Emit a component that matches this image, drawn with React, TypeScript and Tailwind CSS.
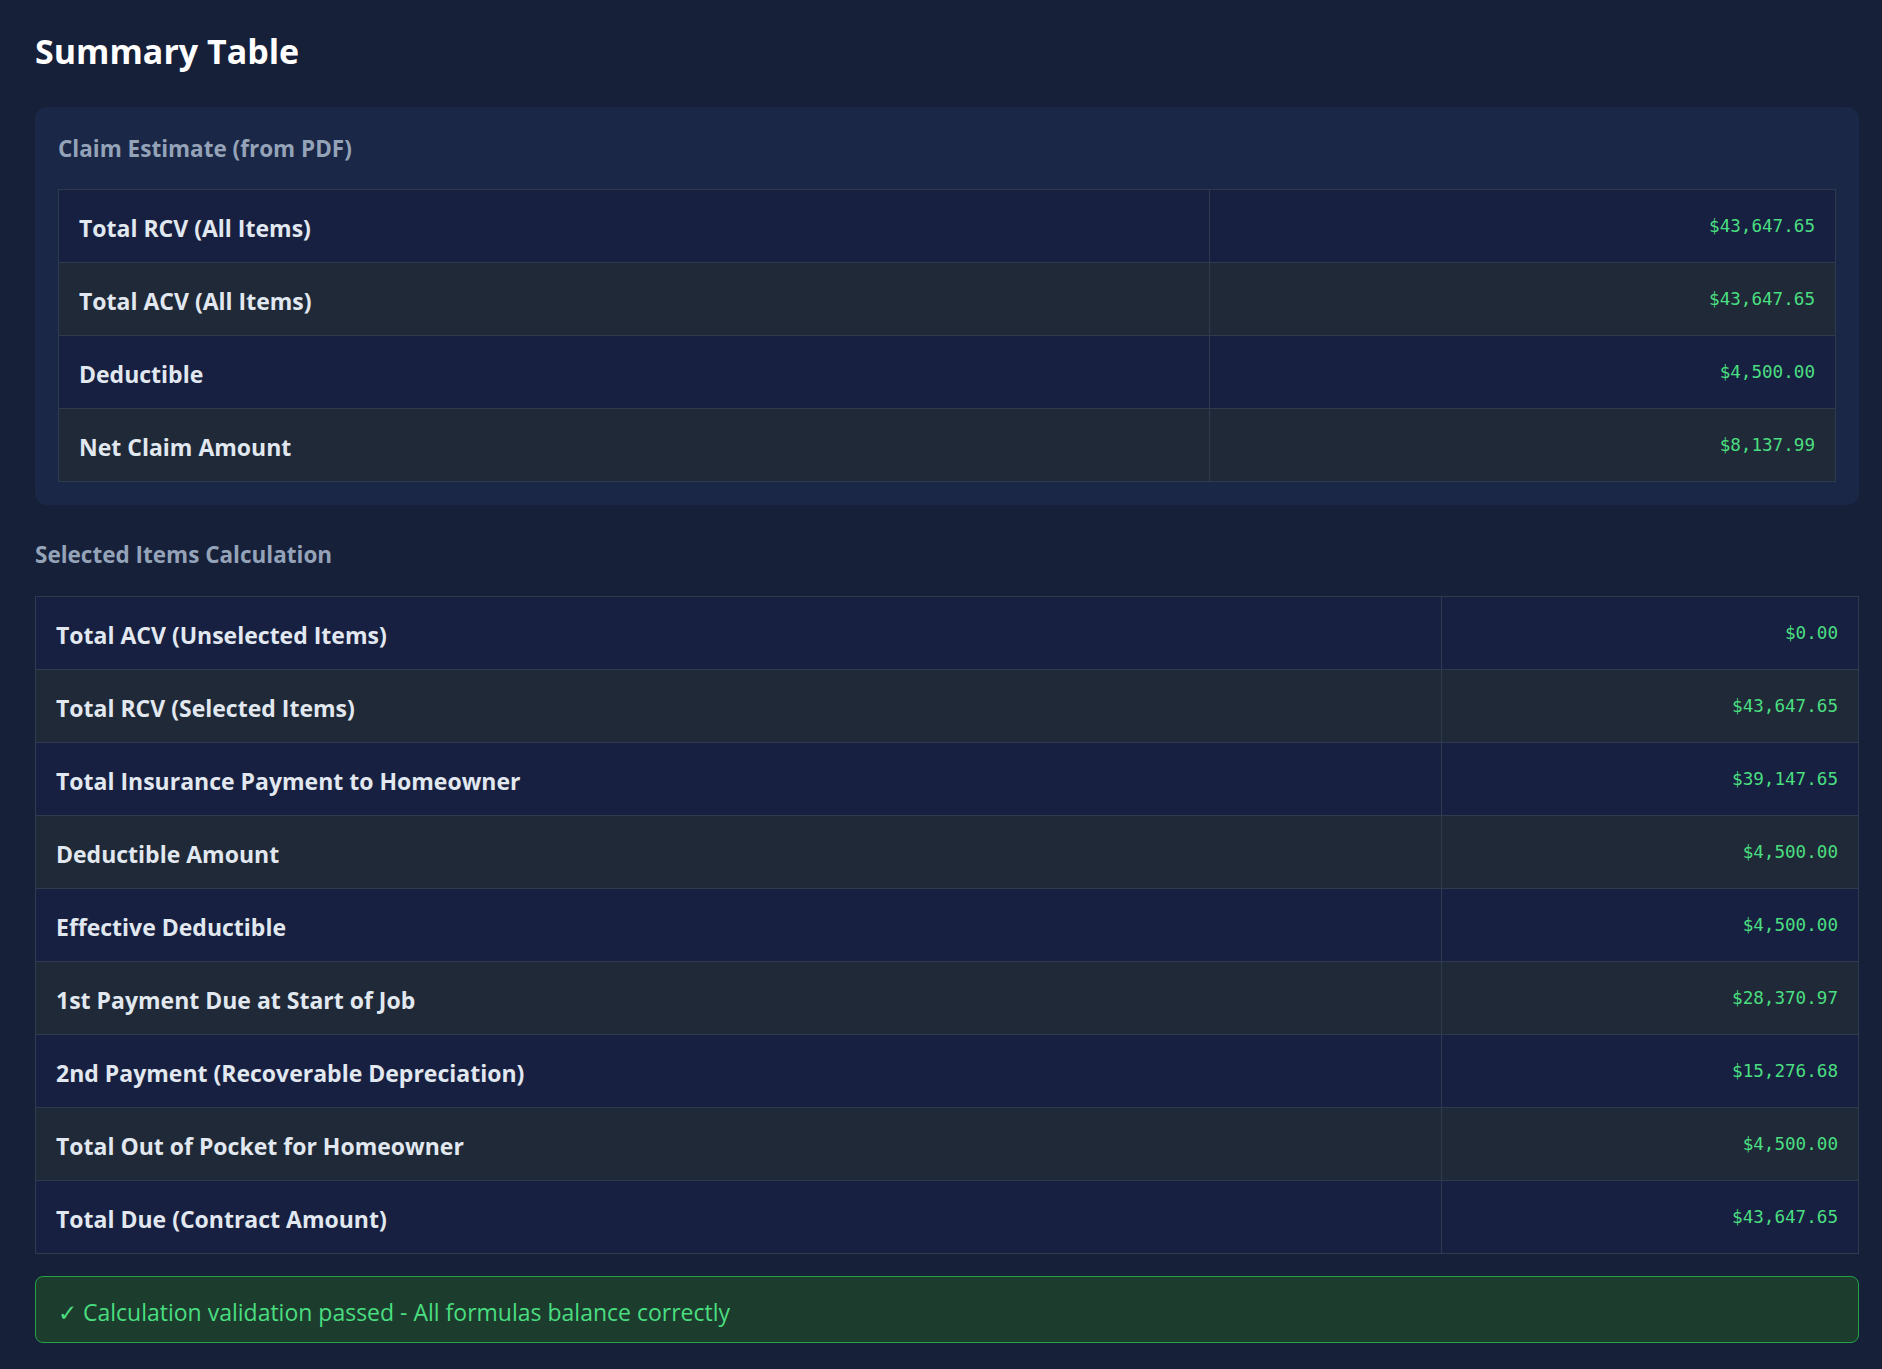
import React from 'react';

type Row = { label: string; value: string };

const claimRows: Row[] = [
  { label: 'Total RCV (All Items)', value: '$43,647.65' },
  { label: 'Total ACV (All Items)', value: '$43,647.65' },
  { label: 'Deductible', value: '$4,500.00' },
  { label: 'Net Claim Amount', value: '$8,137.99' },
];

const selectedRows: Row[] = [
  { label: 'Total ACV (Unselected Items)', value: '$0.00' },
  { label: 'Total RCV (Selected Items)', value: '$43,647.65' },
  { label: 'Total Insurance Payment to Homeowner', value: '$39,147.65' },
  { label: 'Deductible Amount', value: '$4,500.00' },
  { label: 'Effective Deductible', value: '$4,500.00' },
  { label: '1st Payment Due at Start of Job', value: '$28,370.97' },
  { label: '2nd Payment (Recoverable Depreciation)', value: '$15,276.68' },
  { label: 'Total Out of Pocket for Homeowner', value: '$4,500.00' },
  { label: 'Total Due (Contract Amount)', value: '$43,647.65' },
];

function SummaryRows({ rows, wide }: { rows: Row[]; wide: boolean }) {
  return (
    <div className="border border-[#2e3a4e]">
      {rows.map((row, i) => (
        <div
          key={row.label}
          className={`grid ${wide ? 'grid-cols-[1fr_626px]' : 'grid-cols-[1fr_417px]'} ${
            i > 0 ? 'h-[73px] border-t border-[#2e3a4e]' : 'h-[72px]'
          } ${i % 2 === 1 ? 'bg-[#1f2937]' : 'bg-[#172040]'}`}
        >
          <div className="flex items-center pl-5 pt-[5px] text-[23px] font-bold text-[#e2e8f0]">
            {row.label}
          </div>
          <div className="flex items-center justify-end border-l border-[#2e3a4e] pr-5 font-['DejaVu_Sans_Mono',monospace] text-[17.6px] text-[#4ade80]">
            {row.value}
          </div>
        </div>
      ))}
    </div>
  );
}

export default function App() {
  return (
    <div className="min-h-screen bg-[#172039] pl-[35px] pr-[23px] pt-[31px] pb-[27px] font-['Open_Sans',sans-serif]">
      {/* header */}
      <h1 className="text-[34px] font-bold leading-[41px] text-white">Summary Table</h1>

      {/* claim estimate card */}
      <div className="mt-[35px] rounded-xl bg-[#1b2746] px-[23px] pt-[26px] pb-[23px]">
        <h2 className="mb-[24px] text-[22.5px] font-bold leading-[32px] text-[#94a3b8]">
          Claim Estimate (from PDF)
        </h2>
        <SummaryRows rows={claimRows} wide />
      </div>

      {/* selected items */}
      <h2 className="mt-[34px] mb-[25px] text-[22.5px] font-bold leading-[32px] text-[#94a3b8]">
        Selected Items Calculation
      </h2>
      <SummaryRows rows={selectedRows} wide={false} />

      <div className="mt-[22px] flex h-[67px] items-center rounded-lg border border-[#25a244] bg-[#1c3d2e] px-[22px] pt-[5px] text-[23px] text-[#4ade80]">
        ✓ Calculation validation passed - All formulas balance correctly
      </div>
    </div>
  );
}
